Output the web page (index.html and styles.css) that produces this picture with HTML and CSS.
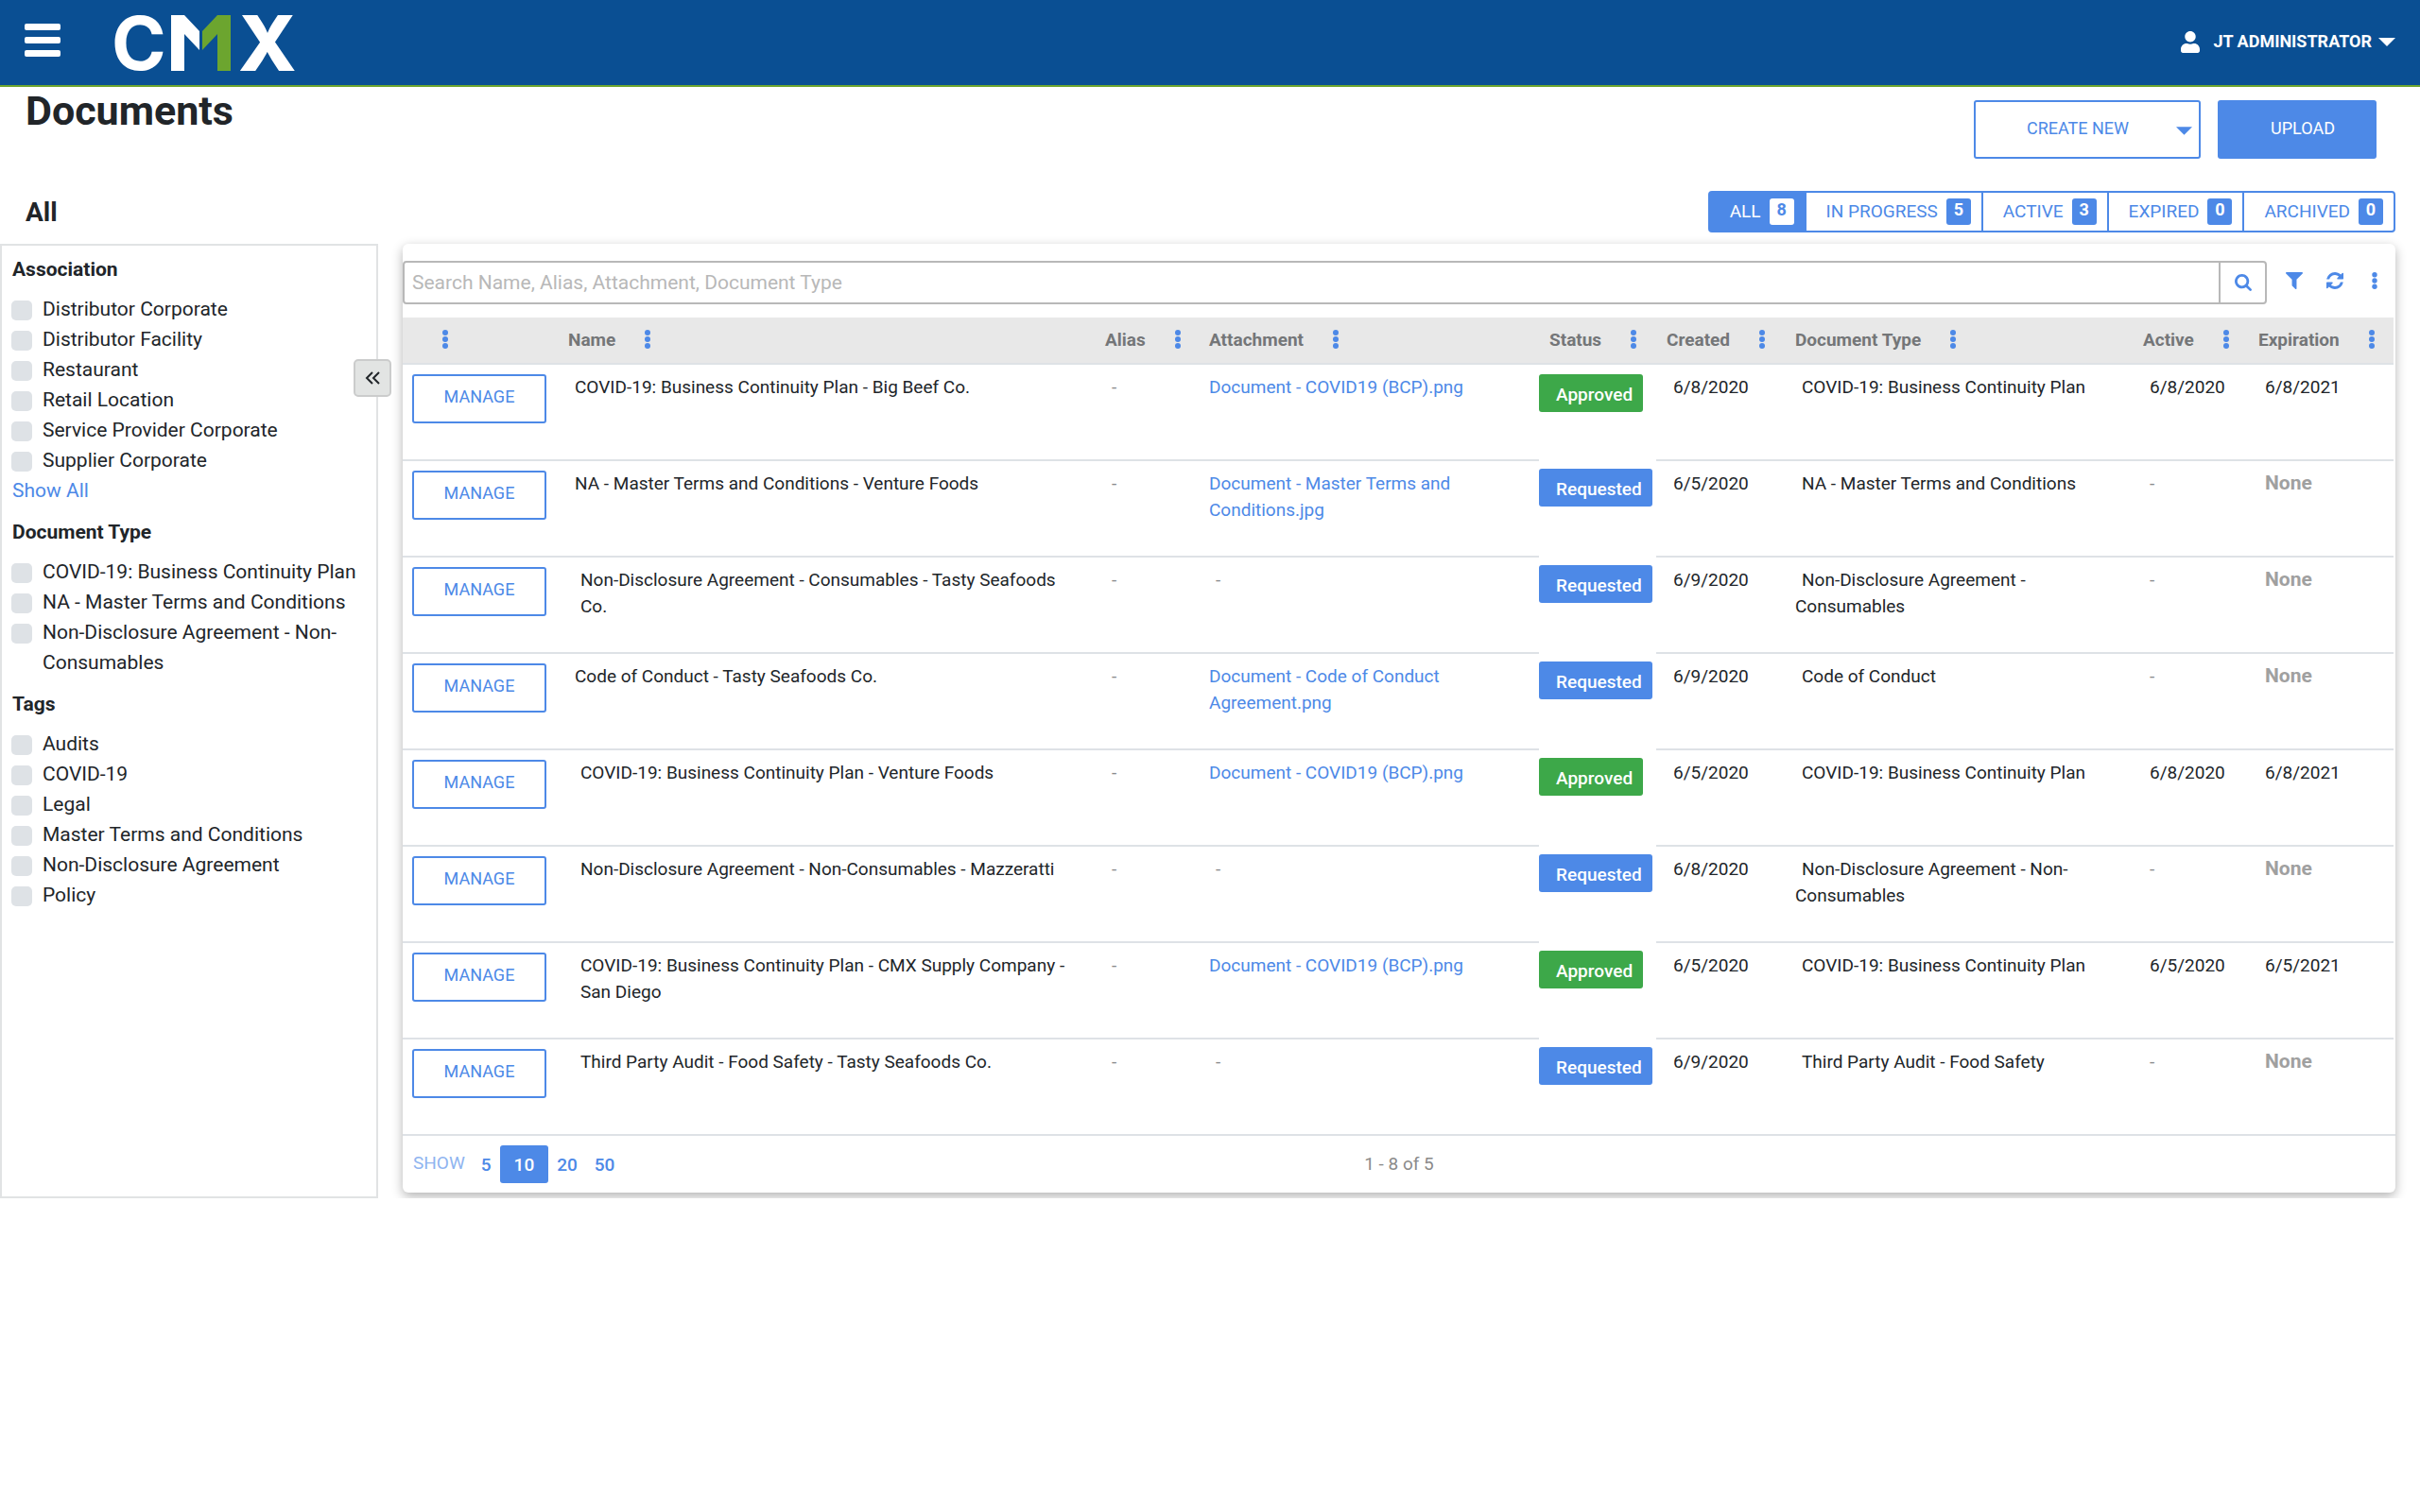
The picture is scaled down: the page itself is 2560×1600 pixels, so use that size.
FILE: index.html
```html
<!DOCTYPE html>
<html lang="en">
<head>
    <meta charset="UTF-8">
    <meta name="viewport" content="width=device-width, initial-scale=1.0">
    <title>CMX - Documents</title>
    <link rel="stylesheet" href="styles.css">
</head>
<body>
    <svg class="sprite" aria-hidden="true">
        <symbol id="dots" viewBox="0 0 6 20">
            <circle cx="3" cy="3" r="3"/><circle cx="3" cy="10" r="3"/><circle cx="3" cy="17" r="3"/>
        </symbol>
        <symbol id="caret" viewBox="0 0 18 9">
            <path d="M0 0h18L9 9z"/>
        </symbol>
    </svg>

    <header class="topbar">
        <button class="menu-btn" aria-label="Menu"><span></span><span></span><span></span></button>
        <a class="logo" href="#" aria-label="CMX">
            <svg viewBox="0 0 194 60" width="194" height="60">
                <text class="logo-c" x="-2" y="59">C</text>
                <path fill="#fff" d="M61 1h14l16 17v20L75 21v39H61z"/>
                <path fill="#6ca52f" d="M124 1h-14L94 18v20l16-17v39h14z"/>
                <text class="logo-x" x="132" y="60">X</text>
            </svg>
        </a>
        <button class="user-btn">
            <svg class="user-icon" viewBox="0 0 448 512"><path d="M224 256c70.700 0 128-57.300 128-128S294.700 0 224 0 96 57.300 96 128s57.300 128 128 128zm90 32h-17c-22 10-47 16-73 16s-51-6-73-16h-17C60 288 0 348 0 422v42c0 26 22 48 48 48h352c26 0 48-22 48-48v-42c0-74-60-134-134-134z"/></svg>
            JT ADMINISTRATOR
            <svg class="caret"><use href="#caret"/></svg>
        </button>
    </header>

    <div class="page-head">
        <h1>Documents</h1>
        <div class="actions">
            <div class="split-btn">
                <button class="split-main">CREATE NEW</button>
                <button class="split-toggle" aria-label="More"><svg class="caret"><use href="#caret"/></svg></button>
            </div>
            <button class="upload-btn">UPLOAD</button>
        </div>
    </div>

    <div class="sub-head">
        <h2>All</h2>
        <div class="tabs">
            <button class="tab active">ALL <span class="count">8</span></button>
            <button class="tab">IN PROGRESS <span class="count">5</span></button>
            <button class="tab">ACTIVE <span class="count">3</span></button>
            <button class="tab">EXPIRED <span class="count">0</span></button>
            <button class="tab">ARCHIVED <span class="count">0</span></button>
        </div>
    </div>

    <div class="content">
        <aside class="sidebar">
            <button class="collapse-btn" aria-label="Collapse filters">
                <svg viewBox="0 0 16 14" width="16" height="14"><path d="M8 1L2 7l6 6M15 1L9 7l6 6"/></svg>
            </button>
            <section class="filter-group">
                <h3>Association</h3>
                <label><input type="checkbox">Distributor Corporate</label>
                <label><input type="checkbox">Distributor Facility</label>
                <label><input type="checkbox">Restaurant</label>
                <label><input type="checkbox">Retail Location</label>
                <label><input type="checkbox">Service Provider Corporate</label>
                <label><input type="checkbox">Supplier Corporate</label>
                <a href="#">Show All</a>
            </section>
            <section class="filter-group">
                <h3>Document Type</h3>
                <label><input type="checkbox">COVID-19: Business Continuity Plan</label>
                <label><input type="checkbox">NA - Master Terms and Conditions</label>
                <label><input type="checkbox">Non-Disclosure Agreement - Non-Consumables</label>
            </section>
            <section class="filter-group">
                <h3>Tags</h3>
                <label><input type="checkbox">Audits</label>
                <label><input type="checkbox">COVID-19</label>
                <label><input type="checkbox">Legal</label>
                <label><input type="checkbox">Master Terms and Conditions</label>
                <label><input type="checkbox">Non-Disclosure Agreement</label>
                <label><input type="checkbox">Policy</label>
            </section>
        </aside>

        <main class="card">
            <div class="toolbar">
                <div class="search">
                    <input type="text" aria-label="Search" placeholder="Search Name, Alias, Attachment, Document Type">
                    <button aria-label="Search">
                        <svg class="tool-icon" viewBox="0 128 1664 1664"><path d="M1152 832q0-185-131-316T704 384 388 516 256 832t132 316 316 132 317-132 131-316zm512 832q0 52-38 90t-90 38q-54 0-90-38l-343-342q-179 124-399 124-143 0-273-55t-225-150-150-225T0 832t56-273 150-225 225-150 273-56 273 56 225 150 150 225 56 273q0 220-124 399l343 343q37 37 37 90z"/></svg>
                    </button>
                </div>
                <button class="tool-btn" aria-label="Filter">
                    <svg class="tool-icon" viewBox="0 256 1408 1408"><path d="M1403 295q17 41-14 70L896 858v742q0 42-39 59-13 5-25 5-27 0-45-19l-256-256q-19-19-19-45V858L19 365q-31-29-14-70 17-39 59-39h1280q42 0 59 39z"/></svg>
                </button>
                <button class="tool-btn" aria-label="Refresh">
                    <svg class="tool-icon" viewBox="0 0 1536 1536"><path d="M1511 928q0 5-1 7-64 268-268 434T764 1536q-146 0-282-55t-244-157l-129 129q-19 19-45 19t-45-19-19-45V960q0-26 19-45t45-19h448q26 0 45 19t19 45-19 45l-137 137q71 66 161 102t187 36q134 0 250-65t186-179q11-17 53-117 8-23 30-23h192q13 0 22 10t10 22zm25-800v448q0 26-19 45t-45 19h-448q-26 0-45-19t-19-45 19-45l138-138Q969 256 768 256q-134 0-250 65T332 500q-11 17-53 117-8 23-30 23H50q-13 0-22-10t-10-22v-7q65-268 270-434T768 0q146 0 284 56t245 156l130-129q19-19 45-19t45 19 19 45z"/></svg>
                </button>
                <button class="tool-btn" aria-label="More options"><svg class="dots"><use href="#dots"/></svg></button>
            </div>

            <table class="grid">
                <colgroup>
                    <col class="col-manage"><col><col class="col-alias"><col class="col-attachment"><col class="col-status"><col class="col-created"><col class="col-type"><col class="col-active"><col class="col-expiration">
                </colgroup>
                <thead>
                    <tr>
                        <th><button aria-label="Column menu"><svg class="dots"><use href="#dots"/></svg></button></th>
                        <th>Name<button aria-label="Column menu"><svg class="dots"><use href="#dots"/></svg></button></th>
                        <th>Alias<button aria-label="Column menu"><svg class="dots"><use href="#dots"/></svg></button></th>
                        <th>Attachment<button aria-label="Column menu"><svg class="dots"><use href="#dots"/></svg></button></th>
                        <th>Status<button aria-label="Column menu"><svg class="dots"><use href="#dots"/></svg></button></th>
                        <th>Created<button aria-label="Column menu"><svg class="dots"><use href="#dots"/></svg></button></th>
                        <th>Document Type<button aria-label="Column menu"><svg class="dots"><use href="#dots"/></svg></button></th>
                        <th>Active<button aria-label="Column menu"><svg class="dots"><use href="#dots"/></svg></button></th>
                        <th>Expiration<button aria-label="Column menu"><svg class="dots"><use href="#dots"/></svg></button></th>
                    </tr>
                </thead>
                <tbody>
                    <tr>
                        <td class="manage"><button>MANAGE</button></td>
                        <td class="lead">COVID-19: Business Continuity Plan - Big Beef Co.</td>
                        <td class="lead muted">-</td>
                        <td><a href="#">Document - COVID19 (BCP).png</a></td>
                        <td class="status"><span class="badge approved">Approved</span></td>
                        <td class="lead">6/8/2020</td>
                        <td class="lead">COVID-19: Business Continuity Plan</td>
                        <td class="lead">6/8/2020</td>
                        <td class="lead">6/8/2021</td>
                    </tr>
                    <tr>
                        <td class="manage"><button>MANAGE</button></td>
                        <td class="lead">NA - Master Terms and Conditions - Venture Foods</td>
                        <td class="lead muted">-</td>
                        <td><a href="#">Document - Master Terms and Conditions.jpg</a></td>
                        <td class="status"><span class="badge requested">Requested</span></td>
                        <td class="lead">6/5/2020</td>
                        <td class="lead">NA - Master Terms and Conditions</td>
                        <td class="lead muted">-</td>
                        <td class="lead none">None</td>
                    </tr>
                    <tr>
                        <td class="manage"><button>MANAGE</button></td>
                        <td class="child">Non-Disclosure Agreement - Consumables - Tasty Seafoods Co.</td>
                        <td class="lead muted">-</td>
                        <td class="lead muted">-</td>
                        <td class="status"><span class="badge requested">Requested</span></td>
                        <td class="lead">6/9/2020</td>
                        <td class="lead">Non-Disclosure Agreement - Consumables</td>
                        <td class="lead muted">-</td>
                        <td class="lead none">None</td>
                    </tr>
                    <tr>
                        <td class="manage"><button>MANAGE</button></td>
                        <td class="lead">Code of Conduct - Tasty Seafoods Co.</td>
                        <td class="lead muted">-</td>
                        <td><a href="#">Document - Code of Conduct Agreement.png</a></td>
                        <td class="status"><span class="badge requested">Requested</span></td>
                        <td class="lead">6/9/2020</td>
                        <td class="lead">Code of Conduct</td>
                        <td class="lead muted">-</td>
                        <td class="lead none">None</td>
                    </tr>
                    <tr>
                        <td class="manage"><button>MANAGE</button></td>
                        <td class="child">COVID-19: Business Continuity Plan - Venture Foods</td>
                        <td class="lead muted">-</td>
                        <td><a href="#">Document - COVID19 (BCP).png</a></td>
                        <td class="status"><span class="badge approved">Approved</span></td>
                        <td class="lead">6/5/2020</td>
                        <td class="lead">COVID-19: Business Continuity Plan</td>
                        <td class="lead">6/8/2020</td>
                        <td class="lead">6/8/2021</td>
                    </tr>
                    <tr>
                        <td class="manage"><button>MANAGE</button></td>
                        <td class="child">Non-Disclosure Agreement - Non-Consumables - Mazzeratti</td>
                        <td class="lead muted">-</td>
                        <td class="lead muted">-</td>
                        <td class="status"><span class="badge requested">Requested</span></td>
                        <td class="lead">6/8/2020</td>
                        <td class="lead">Non-Disclosure Agreement - Non-Consumables</td>
                        <td class="lead muted">-</td>
                        <td class="lead none">None</td>
                    </tr>
                    <tr>
                        <td class="manage"><button>MANAGE</button></td>
                        <td class="child">COVID-19: Business Continuity Plan - CMX Supply Company - San Diego</td>
                        <td class="lead muted">-</td>
                        <td><a href="#">Document - COVID19 (BCP).png</a></td>
                        <td class="status"><span class="badge approved">Approved</span></td>
                        <td class="lead">6/5/2020</td>
                        <td class="lead">COVID-19: Business Continuity Plan</td>
                        <td class="lead">6/5/2020</td>
                        <td class="lead">6/5/2021</td>
                    </tr>
                    <tr>
                        <td class="manage"><button>MANAGE</button></td>
                        <td class="child">Third Party Audit - Food Safety - Tasty Seafoods Co.</td>
                        <td class="lead muted">-</td>
                        <td class="lead muted">-</td>
                        <td class="status"><span class="badge requested">Requested</span></td>
                        <td class="lead">6/9/2020</td>
                        <td class="lead">Third Party Audit - Food Safety</td>
                        <td class="lead muted">-</td>
                        <td class="lead none">None</td>
                    </tr>
                </tbody>
            </table>

            <div class="pager">
                <div class="page-sizes">
                    <span class="show">SHOW</span>
                    <button>5</button>
                    <button class="active">10</button>
                    <button>20</button>
                    <button>50</button>
                </div>
                <span class="range">1 - 8 of 5</span>
            </div>
        </main>
    </div>
</body>
</html>
```

FILE: styles.css
```css
* {
    box-sizing: border-box;
}
body {
    margin: 0;
    font-family: Roboto, "Liberation Sans", sans-serif;
    font-size: 19px;
    line-height: 28px;
    color: #212529;
    background-color: #fff;
}
h1, h2, h3 {
    margin: 0;
}
button {
    padding: 0;
    border: 0;
    background: none;
    color: #4d89e7;
    font: inherit;
    cursor: pointer;
}
a {
    color: #4d89e7;
    text-decoration: none;
}
svg {
    display: block;
    fill: currentColor;
}
.sprite {
    display: none;
}
.caret {
    width: 18px;
    height: 9px;
}
.dots {
    width: 6px;
    height: 20px;
}

/* Top bar */
.topbar {
    display: flex;
    align-items: center;
    height: 92px;
    padding: 0 26px;
    background-color: #0a4f93;
    border-bottom: 2px solid #6ca52f;
}
.menu-btn {
    display: flex;
    flex-direction: column;
    gap: 7px;
    width: 38px;
    padding-bottom: 6px;
}
.menu-btn span {
    height: 7px;
    border-radius: 2px;
    background-color: #fff;
}
.logo {
    margin-left: 56px;
}
.logo svg {
    overflow: visible;
}
.logo-c, .logo-x {
    fill: #fff;
    font-family: Inter, sans-serif;
    font-size: 81px;
    font-weight: 800;
}
.logo-c {
    font-size: 78px;
    font-weight: 700;
}
.user-btn {
    display: flex;
    align-items: center;
    margin-left: auto;
    padding-bottom: 2px;
    color: #fff;
    font-size: 18px;
    font-weight: 700;
}
.user-icon {
    width: 20px;
    height: 23px;
    margin-right: 14px;
}
.user-btn .caret {
    margin-left: 7px;
}

/* Page heading */
.page-head {
    display: flex;
    justify-content: space-between;
    align-items: flex-start;
    height: 110px;
    padding: 0 46px 0 27px;
}
.page-head h1 {
    font-size: 43px;
    line-height: 50px;
}
.actions {
    display: flex;
    gap: 18px;
    margin-top: 14px;
    font-size: 18px;
}
.split-btn {
    display: flex;
    width: 240px;
    height: 62px;
    border: 2px solid #4d89e7;
    border-radius: 3px;
}
.split-main {
    flex: 1;
    padding: 0 0 2px 4px;
}
.split-toggle {
    padding: 2px 7px 0 0;
}
.split-toggle .caret {
    width: 17px;
}
.upload-btn {
    width: 168px;
    height: 62px;
    padding: 0 0 2px 12px;
    border-radius: 3px;
    background-color: #4d89e7;
    color: #fff;
}
.sub-head {
    display: flex;
    justify-content: space-between;
    align-items: center;
    padding: 0 26px 12px 27px;
}
.sub-head h2 {
    padding-top: 2px;
    font-size: 28px;
}

/* Status tabs */
.tabs {
    display: flex;
    height: 44px;
    border: 2px solid #4d89e7;
    border-radius: 4px;
}
.tab {
    display: flex;
    align-items: center;
    gap: 9px;
    padding: 0 11px 0 21px;
}
.tab + .tab {
    border-left: 2px solid #4d89e7;
}
.tab.active {
    background-color: #4d89e7;
    color: #fff;
}
.count {
    width: 26px;
    height: 28px;
    border-radius: 3px;
    background-color: #4d89e7;
    color: #fff;
    font-size: 18px;
    font-weight: 700;
    line-height: 24px;
}
.tab.active .count {
    background-color: #fff;
    color: #4d89e7;
}

/* Filters */
.content {
    display: flex;
    gap: 26px;
    padding-right: 26px;
}
.sidebar {
    position: relative;
    display: flex;
    flex-direction: column;
    gap: 12px;
    flex: 0 0 400px;
    padding: 9px 10px;
    border: 2px solid #e1e3e4;
    font-size: 21px;
    line-height: 32px;
}
.sidebar h3 {
    margin-bottom: 10px;
    font-size: 21px;
}
.filter-group {
    padding-left: 1px;
}
.filter-group label {
    display: flex;
    gap: 11px;
}
.filter-group input {
    appearance: none;
    flex: none;
    width: 22px;
    height: 21px;
    margin: 7px 0 0 -1px;
    border-radius: 5px;
    background-color: #dee2e6;
}
.collapse-btn {
    position: absolute;
    top: 120px;
    right: -16px;
    display: flex;
    align-items: center;
    justify-content: center;
    width: 40px;
    height: 40px;
    border: 2px solid #cbcccc;
    border-radius: 5px;
    background-color: #e2e4e3;
    color: #212529;
}
.collapse-btn svg {
    fill: none;
    stroke: currentColor;
    stroke-width: 2;
}

/* Documents card */
.card {
    flex: 1;
    min-width: 0;
    margin-bottom: 6px;
    padding-top: 18px;
    border-radius: 6px;
    background-color: #fff;
    box-shadow: 0 4px 12px rgba(0, 0, 0, 0.3);
}
.toolbar {
    display: flex;
    align-items: center;
    gap: 25px;
    padding: 0 19px 14px 0;
}
.search {
    display: flex;
    flex: 1;
    height: 46px;
    margin-right: -5px;
    border: 2px solid #b8b8b8;
    border-radius: 4px;
}
.search input {
    flex: 1;
    padding: 0 8px;
    border: 0;
    outline: none;
    background: none;
    font: inherit;
    font-size: 21px;
}
.search input::placeholder {
    color: #b8b8b8;
}
.search button {
    display: flex;
    align-items: center;
    justify-content: center;
    width: 49px;
    border-left: 2px solid #b8b8b8;
}
.tool-btn {
    padding-bottom: 4px;
}
.tool-icon {
    width: 18px;
    height: 18px;
}
.toolbar .tool-btn:last-child {
    margin-left: 5px;
}
.toolbar .dots {
    height: 18px;
}

/* Table */
.grid {
    width: calc(100% - 2px);
    table-layout: fixed;
    border-spacing: 0;
}
.col-manage {
    width: 164px;
}
.col-alias {
    width: 110px;
}
.col-attachment {
    width: 360px;
}
.col-status {
    width: 124px;
}
.col-created {
    width: 136px;
}
.col-type {
    width: 368px;
}
.col-active {
    width: 122px;
}
.col-expiration {
    width: 154px;
}
.grid th {
    height: 48px;
    padding: 0 11px;
    background-color: #e8e8e8;
    color: #747678;
    font-weight: 700;
    text-align: left;
    white-space: nowrap;
}
.grid th button {
    margin: 0 0 4px 31px;
    vertical-align: middle;
}
.grid td {
    height: 102px;
    padding: 10px 11px 0;
    border-top: 2px solid #dee2e6;
    vertical-align: top;
}
.grid .lead {
    text-indent: 7px;
}
.grid .child {
    padding-left: 24px;
}
.grid .muted {
    color: #8a8c8e;
}
.grid .none {
    padding-top: 9px;
    color: #a0a0a0;
    font-size: 21px;
    font-weight: 700;
}
.grid .manage {
    padding: 10px 10px 0;
}
.manage button {
    display: block;
    width: 142px;
    height: 52px;
    padding-bottom: 4px;
    border: 2px solid #4d89e7;
    border-radius: 3px;
    font-size: 18px;
}
.grid .status {
    padding: 10px 0 0;
}
.grid tr + tr .status {
    border-top: 0;
}
.badge {
    display: block;
    width: fit-content;
    height: 40px;
    padding: 0 11px 0 18px;
    border-radius: 3px;
    color: #fff;
    font-weight: 500;
    line-height: 43px;
}
.approved {
    background-color: #3da849;
}
.requested {
    background-color: #4d89e7;
}

/* Pager */
.pager {
    display: grid;
    grid-template-columns: 1fr auto 1fr;
    align-items: center;
    height: 62px;
    padding: 0 11px;
    border-top: 2px solid #dee2e6;
    line-height: 38px;
}
.page-sizes {
    display: flex;
}
.page-sizes button {
    padding: 2px 9px 0;
    border-radius: 3px;
    font-weight: 500;
}
.page-sizes .active {
    padding: 2px 15px 0;
    background-color: #4d89e7;
    color: #fff;
}
.show {
    margin-right: 8px;
    color: #8fb4f0;
}
.range {
    color: #8a8a8a;
}
```
